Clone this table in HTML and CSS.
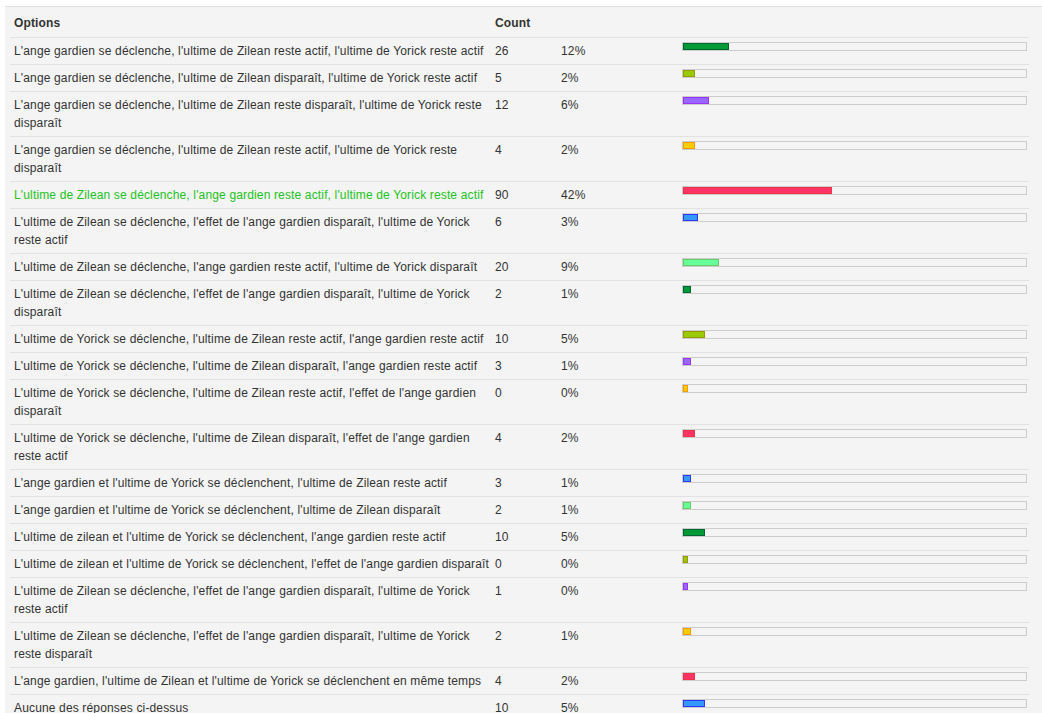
FILE: index.html
```html
<!DOCTYPE html>
<html lang="fr">
<head>
<meta charset="utf-8">
<title>Résultats</title>
<link rel="stylesheet" href="styles.css">
</head>
<body>
<div class="panel">
<table class="results">
<colgroup><col class="c-opt"><col class="c-count"><col class="c-pct"><col class="c-bar"></colgroup>
<thead>
<tr><th>Options</th><th>Count</th><th></th><th></th></tr>
</thead>
<tbody>
<tr><td>L'ange gardien se déclenche, l'ultime de Zilean reste actif, l'ultime de Yorick reste actif</td><td>26</td><td>12%</td><td class="barcell"><div class="bar"><div class="fill c1" style="width:12%"></div></div></td></tr>
<tr><td>L'ange gardien se déclenche, l'ultime de Zilean disparaît, l'ultime de Yorick reste actif</td><td>5</td><td>2%</td><td class="barcell"><div class="bar"><div class="fill c2" style="width:2%"></div></div></td></tr>
<tr><td>L'ange gardien se déclenche, l'ultime de Zilean reste disparaît, l'ultime de Yorick reste disparaît</td><td>12</td><td>6%</td><td class="barcell"><div class="bar"><div class="fill c3" style="width:6%"></div></div></td></tr>
<tr><td>L'ange gardien se déclenche, l'ultime de Zilean reste actif, l'ultime de Yorick reste disparaît</td><td>4</td><td>2%</td><td class="barcell"><div class="bar"><div class="fill c4" style="width:2%"></div></div></td></tr>
<tr class="winner"><td>L'ultime de Zilean se déclenche, l'ange gardien reste actif, l'ultime de Yorick reste actif</td><td>90</td><td>42%</td><td class="barcell"><div class="bar"><div class="fill c5" style="width:42%"></div></div></td></tr>
<tr><td>L'ultime de Zilean se déclenche, l'effet de l'ange gardien disparaît, l'ultime de Yorick reste actif</td><td>6</td><td>3%</td><td class="barcell"><div class="bar"><div class="fill c6" style="width:3%"></div></div></td></tr>
<tr><td>L'ultime de Zilean se déclenche, l'ange gardien reste actif, l'ultime de Yorick disparaît</td><td>20</td><td>9%</td><td class="barcell"><div class="bar"><div class="fill c7" style="width:9%"></div></div></td></tr>
<tr><td>L'ultime de Zilean se déclenche, l'effet de l'ange gardien disparaît, l'ultime de Yorick disparaît</td><td>2</td><td>1%</td><td class="barcell"><div class="bar"><div class="fill c1" style="width:1%"></div></div></td></tr>
<tr><td>L'ultime de Yorick se déclenche, l'ultime de Zilean reste actif, l'ange gardien reste actif</td><td>10</td><td>5%</td><td class="barcell"><div class="bar"><div class="fill c2" style="width:5%"></div></div></td></tr>
<tr><td>L'ultime de Yorick se déclenche, l'ultime de Zilean disparaît, l'ange gardien reste actif</td><td>3</td><td>1%</td><td class="barcell"><div class="bar"><div class="fill c3" style="width:1%"></div></div></td></tr>
<tr><td>L'ultime de Yorick se déclenche, l'ultime de Zilean reste actif, l'effet de l'ange gardien disparaît</td><td>0</td><td>0%</td><td class="barcell"><div class="bar"><div class="fill c4" style="width:0%"></div></div></td></tr>
<tr><td>L'ultime de Yorick se déclenche, l'ultime de Zilean disparaît, l'effet de l'ange gardien reste actif</td><td>4</td><td>2%</td><td class="barcell"><div class="bar"><div class="fill c5" style="width:2%"></div></div></td></tr>
<tr><td>L'ange gardien et l'ultime de Yorick se déclenchent, l'ultime de Zilean reste actif</td><td>3</td><td>1%</td><td class="barcell"><div class="bar"><div class="fill c6" style="width:1%"></div></div></td></tr>
<tr><td>L'ange gardien et l'ultime de Yorick se déclenchent, l'ultime de Zilean disparaît</td><td>2</td><td>1%</td><td class="barcell"><div class="bar"><div class="fill c7" style="width:1%"></div></div></td></tr>
<tr><td>L'ultime de zilean et l'ultime de Yorick se déclenchent, l'ange gardien reste actif</td><td>10</td><td>5%</td><td class="barcell"><div class="bar"><div class="fill c1" style="width:5%"></div></div></td></tr>
<tr><td>L'ultime de zilean et l'ultime de Yorick se déclenchent, l'effet de l'ange gardien disparaît</td><td>0</td><td>0%</td><td class="barcell"><div class="bar"><div class="fill c2" style="width:0%"></div></div></td></tr>
<tr><td>L'ultime de Zilean se déclenche, l'effet de l'ange gardien disparaît, l'ultime de Yorick reste actif</td><td>1</td><td>0%</td><td class="barcell"><div class="bar"><div class="fill c3" style="width:0%"></div></div></td></tr>
<tr><td>L'ultime de Zilean se déclenche, l'effet de l'ange gardien disparaît, l'ultime de Yorick reste disparaît</td><td>2</td><td>1%</td><td class="barcell"><div class="bar"><div class="fill c4" style="width:1%"></div></div></td></tr>
<tr><td>L'ange gardien, l'ultime de Zilean et l'ultime de Yorick se déclenchent en même temps</td><td>4</td><td>2%</td><td class="barcell"><div class="bar"><div class="fill c5" style="width:2%"></div></div></td></tr>
<tr><td>Aucune des réponses ci-dessus</td><td>10</td><td>5%</td><td class="barcell"><div class="bar"><div class="fill c6" style="width:5%"></div></div></td></tr>
</tbody>
</table>
</div>
</body>
</html>
```
FILE: styles.css
```css
html, body {
  margin: 0;
  padding: 0;
  background: #ffffff;
}
body {
  font-family: "Liberation Sans", Arial, sans-serif;
  font-size: 12px;
  letter-spacing: 0.15px;
  color: #333333;
}
.panel {
  margin: 6px 0 0 5px;
  padding: 0 0 20px 5px;
  background: #f4f4f4;
  border-top: 1px solid #e2e2e2;
}
.results {
  width: 1019px;
  table-layout: fixed;
  border-collapse: collapse;
  border-spacing: 0;
}
.c-opt { width: 481px; }
.c-count { width: 66px; }
.c-pct { width: 121px; }
.c-bar { width: 351px; }
.results th {
  text-align: left;
  font-weight: bold;
  line-height: 18px;
  padding: 7px 4px 5px 4px;
}
.results td {
  line-height: 18px;
  padding: 4px 4px;
  border-top: 1px solid #e2e2e2;
  vertical-align: top;
}
.results td:first-child {
  padding-right: 1px;
}
.results tr.winner td:first-child {
  color: #22c322;
}
.results td.barcell {
  padding: 4px 2px 4px 4px;
}
.bar {
  box-sizing: border-box;
  width: 100%;
  height: 9px;
  border: 1px solid #cccccc;
  background: #f4f4f4;
}
.fill {
  box-sizing: content-box;
  height: 5px;
  padding-right: 3px;
  border: 1px solid;
}
.c1 { background: #009933; border-color: #006633; }
.c2 { background: #99cc00; border-color: #999900; }
.c3 { background: #9966ff; border-color: #9933ff; }
.c4 { background: #ffcc00; border-color: #ff9900; }
.c5 { background: #ff3366; border-color: #ee3344; }
.c6 { background: #3399ff; border-color: #3333ff; }
.c7 { background: #66ff99; border-color: #66cc66; }
```
